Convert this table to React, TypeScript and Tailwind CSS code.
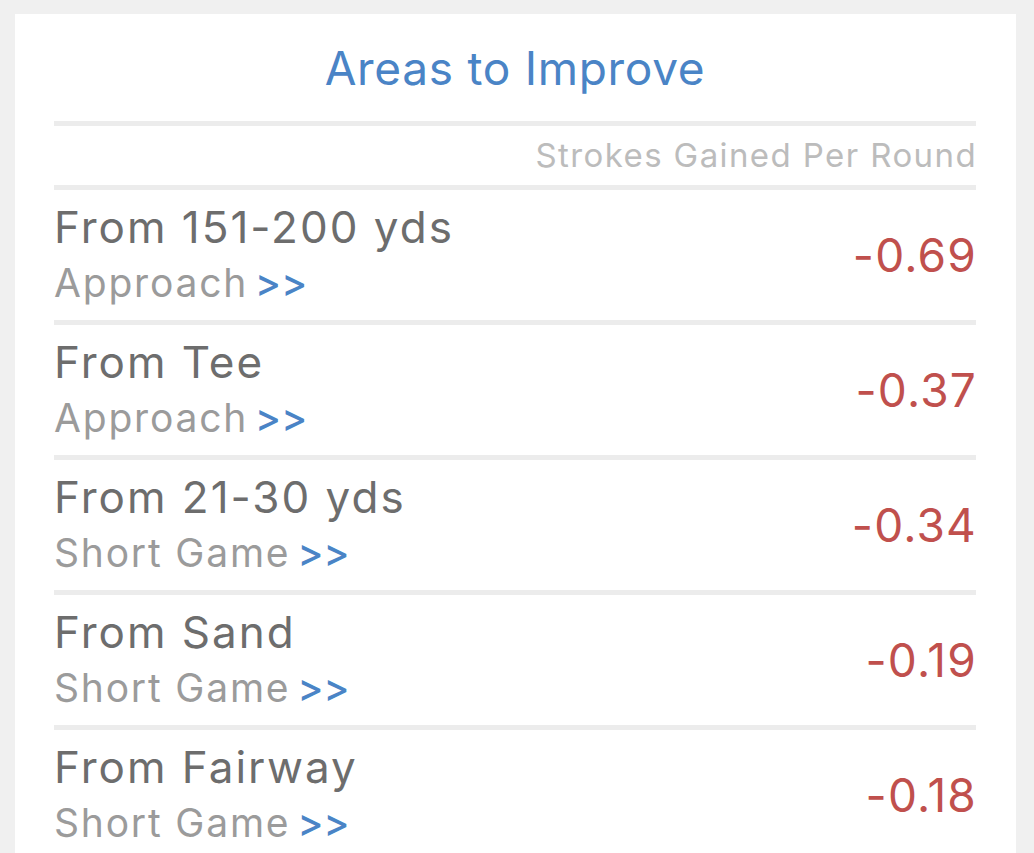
const rows = [
  { title: "From 151-200 yds", category: "Approach", value: "-0.69" },
  { title: "From Tee", category: "Approach", value: "-0.37" },
  { title: "From 21-30 yds", category: "Short Game", value: "-0.34" },
  { title: "From Sand", category: "Short Game", value: "-0.19" },
  { title: "From Fairway", category: "Short Game", value: "-0.18" },
];

function Divider() {
  return <div className="h-[5px] bg-[#ececec]" />;
}

export default function App() {
  return (
    <div
      className="min-h-screen bg-[#f0f0f0] pt-[14px] pl-[15px] pr-[18px] overflow-hidden"
      style={{ fontFamily: "Inter, 'Noto Sans', sans-serif" }}
    >
      <div className="bg-white pl-[39px] pr-[40px] pb-6">
        <div className="h-[107px] flex items-center justify-center">
          <h1 className="text-[46px] leading-none text-[#4a84c6] tracking-[0.7px]">Areas to Improve</h1>
        </div>
        <Divider />
        <div className="h-[59px] flex items-center justify-end">
          <span className="text-[33px] leading-none text-[#bcbcbc] tracking-[1.4px] -mr-[1px]">
            Strokes Gained Per Round
          </span>
        </div>
        <Divider />
        {rows.map((row, i) => (
          <div key={row.title}>
            <div className="h-[130px] flex items-center justify-between">
              <div className="flex flex-col">
                <span className="text-[44px] leading-[56px] text-[#6d6d6d] tracking-[2px]">
                  {row.title}
                </span>
                <span className="text-[39px] leading-[56px] text-[#9b9b9b] tracking-[1.8px]">
                  {row.category}
                  <span className="ml-[7px] text-[#4a84c6] font-medium tracking-[0px]">&gt;&gt;</span>
                </span>
              </div>
              <span className="text-[46px] leading-none text-[#c0504d] tracking-[1.2px] -mr-[1px]">
                {row.value}
              </span>
            </div>
            {i < rows.length - 1 && <Divider />}
          </div>
        ))}
      </div>
    </div>
  );
}
